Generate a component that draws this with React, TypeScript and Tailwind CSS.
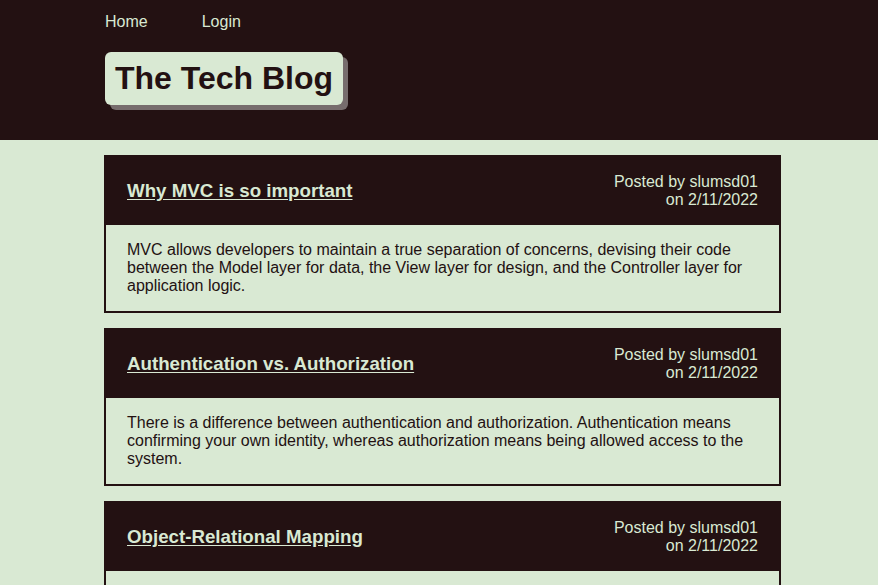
import React from "react";

const posts = [
  {
    title: "Why MVC is so important",
    body: "MVC allows developers to maintain a true separation of concerns, devising their code between the Model layer for data, the View layer for design, and the Controller layer for application logic.",
  },
  {
    title: "Authentication vs. Authorization",
    body: "There is a difference between authentication and authorization. Authentication means confirming your own identity, whereas authorization means being allowed access to the system.",
  },
  {
    title: "Object-Relational Mapping",
    body: "I have really loved learning about ORMs. It's really simplified the way I create queries in SQL!",
  },
];

export default function App() {
  return (
    <div
      className="min-h-[585px] bg-[#d9e9d3] text-[#231112]"
      style={{ fontFamily: '"Liberation Sans", Arial, sans-serif' }}
    >
      <header className="bg-[#231112] h-[140px] pl-[105px] pt-[12px]">
        <nav className="flex gap-[54px] text-[16px] leading-[20px] text-[#d9e9d3]">
          <a>Home</a>
          <a>Login</a>
        </nav>
        <div className="mt-[20px] inline-block rounded-[6px] bg-[#d9e9d3] px-[10px] py-[8px] shadow-[5px_5px_0_#776d6d]">
          <h1 className="text-[32px] leading-[37px] font-bold text-[#231112]">The Tech Blog</h1>
        </div>
      </header>
      <main className="ml-[104px] w-[677px] pt-[15px] flex flex-col gap-[15px]">
        {posts.map((p) => (
          <section key={p.title}>
            <div className="bg-[#231112] h-[70px] flex items-center justify-between px-[23px] text-[#d9e9d3]">
              <h2 className="text-[18.72px] leading-[22px] font-bold underline underline-offset-[2px] pt-[2px]">{p.title}</h2>
              <div className="text-right text-[16px] leading-[18px] pt-[2px]">
                <div>Posted by slumsd01</div>
                <div>on 2/11/2022</div>
              </div>
            </div>
            <div className="border-2 border-t-0 border-[#231112] px-[21px] pt-[16px] pb-[16px] text-[16px] leading-[18px]">
              {p.body}
            </div>
          </section>
        ))}
      </main>
    </div>
  );
}
